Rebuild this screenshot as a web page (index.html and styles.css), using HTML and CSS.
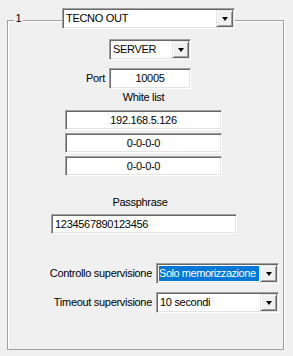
FILE: index.html
```html
<!DOCTYPE html>
<html lang="it">
<head>
  <meta charset="UTF-8" />
  <meta name="viewport" content="width=device-width,initial-scale=1.0" />
  <title>Canale 1</title>
  <link rel="stylesheet" href="styles.css">
</head>
<body>
  <div class="group">
    <div class="head">
      <span class="num">1</span>
      <div class="combo combo-main">
        <span class="value">TECNO OUT</span>
        <span class="drop"><i class="arrow"></i></span>
      </div>
    </div>

    <div class="combo combo-mode">
      <span class="value">SERVER</span>
      <span class="drop"><i class="arrow"></i></span>
    </div>

    <div class="row port-row">
      <span class="port-label">Port</span>
      <div class="field field-port">10005</div>
    </div>

    <div class="caption wl-caption">White list</div>
    <div class="field field-wl">192.168.5.126</div>
    <div class="field field-wl">0-0-0-0</div>
    <div class="field field-wl">0-0-0-0</div>

    <div class="caption pass-caption">Passphrase</div>
    <div class="field field-pass">1234567890123456</div>

    <div class="row opt-row first">
      <span class="opt-label">Controllo supervisione</span>
      <div class="combo combo-opt">
        <span class="value selected">Solo memorizzazione</span>
        <span class="drop"><i class="arrow"></i></span>
      </div>
    </div>
    <div class="row opt-row">
      <span class="opt-label">Timeout supervisione</span>
      <div class="combo combo-opt">
        <span class="value">10 secondi</span>
        <span class="drop"><i class="arrow"></i></span>
      </div>
    </div>
  </div>
</body>
</html>
```

FILE: styles.css
```css
body {
  background: #f0f0f0;
  color: #000;
  font-family: 'Liberation Sans', Arial, sans-serif;
  font-size: 11px;
  line-height: 13px;
  letter-spacing: -0.3px;
  margin: 0;
  padding: 0;
}
.group {
  box-sizing: border-box;
  width: 277px;
  height: 330px;
  margin: 20px 0 0 7px;
  border: 1px solid #a0a0a0;
  box-shadow: inset 1px 1px #fff, 1px 1px #fff;
}
.head {
  display: flex;
  align-items: center;
  height: 21px;
  margin-top: -13px;
}
.num {
  width: 9px;
  margin-left: 6px;
  background: #f0f0f0;
  text-align: center;
}

/* sunken 3d edge shared by combos and text fields */
.combo, .field {
  box-sizing: border-box;
  background: #fff;
  border: 1px solid;
  border-color: #a0a0a0 #fff #fff #a0a0a0;
  box-shadow: inset 1px 1px #696969, inset -1px -1px #e3e3e3;
}
.combo {
  display: flex;
  align-items: stretch;
  height: 21px;
  padding: 1px;
}
.combo .value {
  flex: 1;
  display: flex;
  align-items: center;
  margin: 1px;
  padding-left: 1px;
  white-space: nowrap;
  overflow: hidden;
}
.combo .value.selected {
  background: #0078d7;
  color: #fff;
  padding-left: 0;
  letter-spacing: -0.45px;
}
.drop {
  box-sizing: border-box;
  width: 17px;
  display: flex;
  align-items: center;
  justify-content: center;
  background: #f0f0f0;
  border: 1px solid;
  border-color: #e3e3e3 #696969 #696969 #e3e3e3;
  box-shadow: inset 1px 1px #fff, inset -1px -1px #a0a0a0;
}
.arrow {
  width: 0;
  height: 0;
  border-left: 3.5px solid transparent;
  border-right: 3.5px solid transparent;
  border-top: 4px solid #000;
}
.combo-main {
  width: 173px;
  margin-left: 39px;
}
.combo-mode {
  width: 82px;
  margin: 10px 0 0 101px;
}
.row {
  display: flex;
  align-items: center;
}
.port-row {
  margin-top: 8px;
}
.port-label {
  width: 97px;
  text-align: right;
  margin-right: 4px;
}
.field {
  height: 20px;
  padding: 0 3px;
  display: flex;
  align-items: center;
  justify-content: center;
  white-space: nowrap;
}
.field-port {
  width: 82px;
  height: 21px;
}
.caption {
  text-align: center;
}
.wl-caption {
  width: 157px;
  margin: 2px 0 0 57px;
}
.field-wl {
  width: 157px;
  margin: 3px 0 0 57px;
}
.wl-caption + .field-wl {
  margin-top: 6px;
}
.pass-caption {
  width: 186px;
  margin: 20px 0 0 43px;
  padding-right: 8px;
  box-sizing: border-box;
}
.field-pass {
  width: 186px;
  margin: 5px 0 0 43px;
  justify-content: flex-start;
}
.opt-row {
  margin-top: 8px;
}
.opt-row.first {
  margin-top: 29px;
}
.opt-label {
  width: 144px;
  margin-right: 4px;
  text-align: right;
  white-space: nowrap;
}
.combo-opt {
  width: 123px;
}
```
